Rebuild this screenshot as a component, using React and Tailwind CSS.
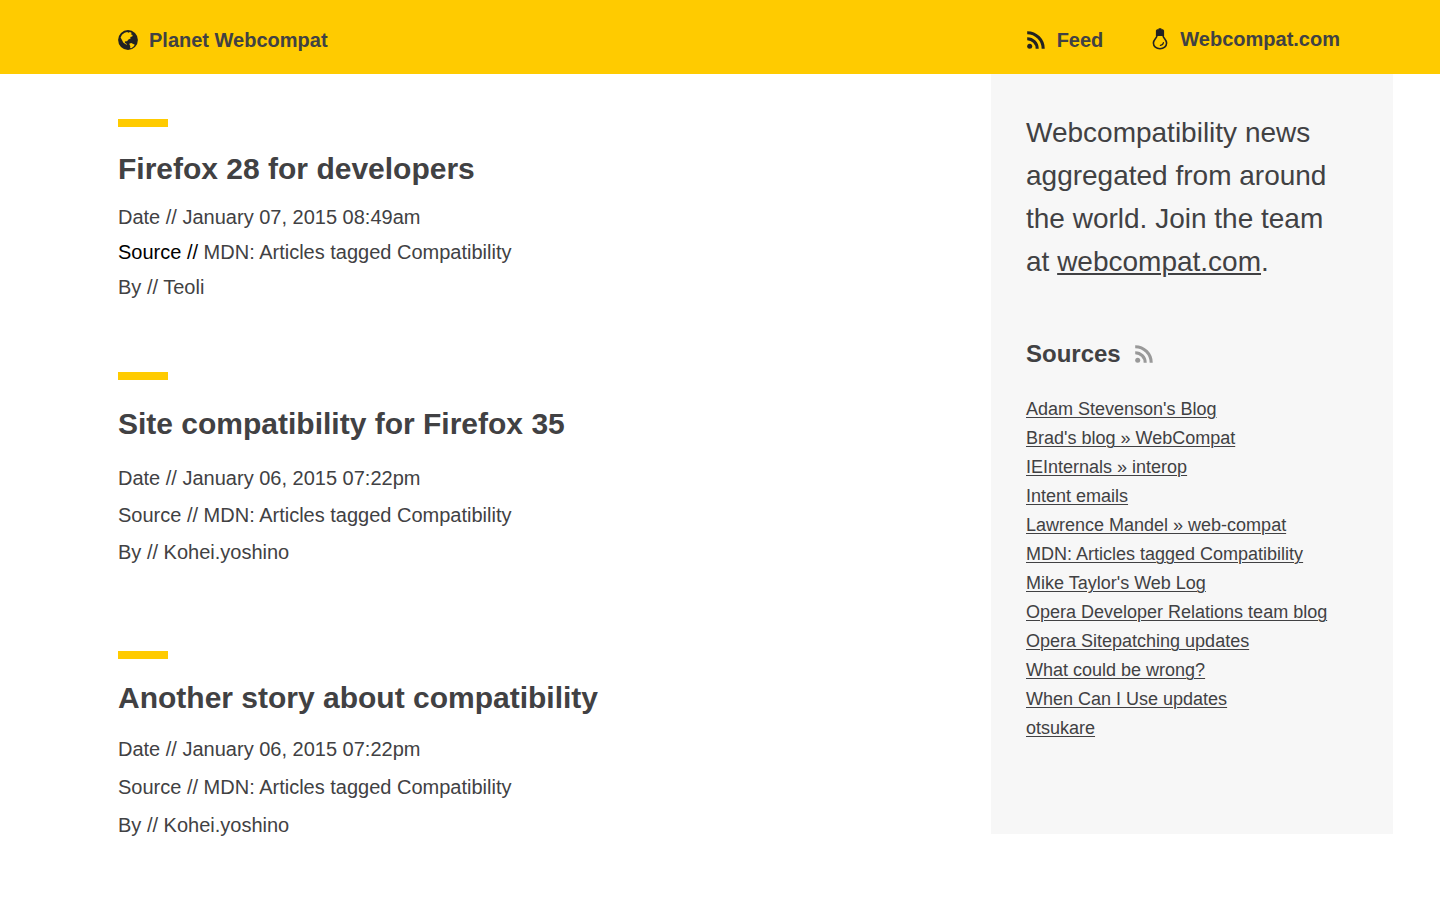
const articles = [
  {
    title: "Firefox 28 for developers",
    date: "January 07, 2015 08:49am",
    author: "Teoli",
    strongSource: true,
    wrap: "pb-[67px]",
    heading: "mt-[22px] mb-[11px]",
    lines: "leading-[35px]",
  },
  {
    title: "Site compatibility for Firefox 35",
    date: "January 06, 2015 07:22pm",
    author: "Kohei.yoshino",
    wrap: "pb-[80px]",
    heading: "mt-[24px] mb-[16px]",
    lines: "leading-[37px]",
  },
  {
    title: "Another story about compatibility",
    date: "January 06, 2015 07:22pm",
    author: "Kohei.yoshino",
    wrap: "",
    heading: "mt-[19px] mb-[12px]",
    lines: "leading-[38px]",
  },
];

const sources = [
  "Adam Stevenson's Blog",
  "Brad's blog » WebCompat",
  "IEInternals » interop",
  "Intent emails",
  "Lawrence Mandel » web-compat",
  "MDN: Articles tagged Compatibility",
  "Mike Taylor's Web Log",
  "Opera Developer Relations team blog",
  "Opera Sitepatching updates",
  "What could be wrong?",
  "When Can I Use updates",
  "otsukare",
];

function GlobeIcon() {
  return (
    <svg width="20" height="20" viewBox="0 0 20 20" aria-hidden="true">
      <circle cx="10" cy="10" r="9.9" fill="#222" />
      <path
        d="M2.6 7.6L4 4.8 6.6 2.8l2.6-.9 1.2.9 1.6-.7 1.8.9-1 1.3 1.9.6-.5 1.6-1.9.4.3 1.5-1.9.9-1.7 1.9-1.3.1-1 .5.4 1.3 1.4.6.6 1.2-1.8-.9-2.1-1.5-1.1-2.2z"
        fill="#ffcb00"
      />
      <path d="M11.2 13.8l2-.7 2.1.9 1.5.8-1.2 1.8-2.3 1.6-1.2-.3.2-1.7z" fill="#ffcb00" />
    </svg>
  );
}

function RssIcon({ color }) {
  return (
    <svg width="18" height="18" viewBox="0 0 18 18" fill="none" stroke={color} strokeWidth="3.1" aria-hidden="true">
      <circle cx="2.7" cy="15.2" r="2.5" fill={color} stroke="none" />
      <path d="M0.2 7.7a10 10 0 0 1 10 10.1" />
      <path d="M0.2 1.7a16 16 0 0 1 16 16.1" />
    </svg>
  );
}

function BulbIcon() {
  return (
    <svg width="16" height="22" viewBox="0 0 16 22" fill="none" aria-hidden="true">
      <path d="M6.6 0.3h2.8v1h1.6l1.1 1.2v5.4H3.9V2.5L5 1.3h1.6z" fill="#222" />
      <path
        d="M5 7.5C4.8 10.3 1.4 11.4 1.4 15c0 3.3 2.9 5.7 6.6 5.7s6.6-2.4 6.6-5.7c0-3.6-3.4-4.7-3.6-7.5"
        stroke="#222"
        strokeWidth="1.6"
      />
      <path d="M11.4 14.6c-.2 1.4-1.2 2.4-3 2.7" stroke="#222" strokeWidth="1.2" strokeLinecap="round" />
    </svg>
  );
}

function Article({ title, date, author, strongSource, wrap, heading, lines }) {
  return (
    <article className={wrap}>
      <div className="h-2 w-[50px] bg-[#ffcb00]" />
      <h2 className={`text-[30px] leading-[40px] font-bold ${heading}`}>{title}</h2>
      <div className={`text-[20px] ${lines}`}>
        <p>Date // {date}</p>
        <p>
          <span className={strongSource ? "text-black" : ""}>Source //</span> MDN: Articles tagged Compatibility
        </p>
        <p>By // {author}</p>
      </div>
    </article>
  );
}

export default function App() {
  return (
    <div className="min-h-screen bg-white font-['Liberation_Sans',Arial,sans-serif] text-[#414143]">
      <header className="flex h-[74px] items-center justify-between bg-[#ffcb00] pt-1.5 pr-[100px] pl-[118px] text-[20px] font-bold">
        <a href="#" className="flex items-center gap-[11px]">
          <GlobeIcon />
          Planet Webcompat
        </a>
        <nav className="flex items-center gap-[49px]">
          <a href="#feed" className="flex items-center gap-3">
            <RssIcon color="#222" />
            Feed
          </a>
          <a href="#webcompat" className="flex items-center gap-3 pb-0.5">
            <BulbIcon />
            Webcompat.com
          </a>
        </nav>
      </header>
      <div className="flex items-start">
        <main className="flex-1 pt-[45px] pl-[118px]">
          {articles.map((a) => (
            <Article key={a.title} {...a} />
          ))}
        </main>
        <aside className="mr-[47px] w-[402px] bg-[#f7f7f7] px-[35px] pt-[37px] pb-[91px]">
          <p className="text-[28px] leading-[43px]">
            Webcompatibility news
            <br />
            aggregated from around
            <br />
            the world. Join the team
            <br />
            at{" "}
            <a href="#webcompat" className="underline decoration-2 underline-offset-2">
              webcompat.com
            </a>
            .
          </p>
          <h3 className="mt-[56px] flex items-center gap-[14px] text-[24px] leading-[30px] font-bold">
            Sources
            <RssIcon color="#999" />
          </h3>
          <ul className="mt-[26px] text-[18px] leading-[29px] whitespace-nowrap">
            {sources.map((s) => (
              <li key={s}>
                <a href="#source" className="underline decoration-1 underline-offset-2">
                  {s}
                </a>
              </li>
            ))}
          </ul>
        </aside>
      </div>
    </div>
  );
}
